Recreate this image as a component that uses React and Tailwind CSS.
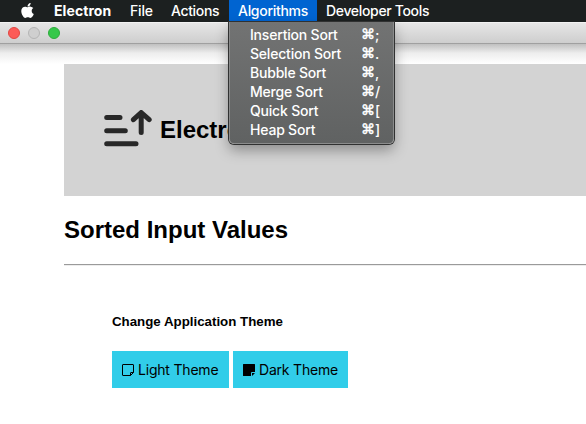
import React from "react";
import { FaApple } from "react-icons/fa";

const ITEMS = [
  ["Insertion Sort", ";"],
  ["Selection Sort", "."],
  ["Bubble Sort", ","],
  ["Merge Sort", "/"],
  ["Quick Sort", "["],
  ["Heap Sort", "]"],
];

function MenuBar() {
  return (
    <nav className="flex h-[22px] items-center bg-[#1c2020] font-['Inter',sans-serif] text-[14px] leading-[22px] font-medium whitespace-nowrap text-white">
      <FaApple className="-mt-[2px] ml-[20px] h-[17px] w-[15px] shrink-0" />
      <span className="ml-[19px] w-[76px] font-bold tracking-[0.08px]">Electron</span>
      <span className="w-[41px] tracking-[-0.2px]">File</span>
      <span className="w-[58px] tracking-[-0.35px]">Actions</span>
      <div className="relative h-[22px] w-[88px] bg-[#0064d1] pl-[9px]">
        <span className="tracking-[-0.3px]">Algorithms</span>
        <Dropdown />
      </div>
      <span className="ml-[9px] tracking-[-0.33px]">Developer Tools</span>
    </nav>
  );
}

function Dropdown() {
  return (
    <ul className="absolute top-[22px] left-0 z-10 h-[122px] w-[165px] rounded-b-[5px] border border-t-0 border-[#8b8c8c] bg-gradient-to-b from-[#727373] to-[#606262] pt-[3px] shadow-[0_0_0_1px_#303131,0_6px_14px_rgba(0,0,0,0.35)]">
      {ITEMS.map(([name, key]) => (
        <li key={name} className="flex h-[19px] items-center pl-[20px] text-[14px] leading-[19px]">
          <span className="w-[111px] tracking-[-0.2px]">{name}</span>
          <span className="w-[14px] font-['DejaVu_Sans',sans-serif] text-[14px] font-normal [-webkit-text-stroke:0.5px_white]">⌘</span>
          <span>{key}</span>
        </li>
      ))}
    </ul>
  );
}

function SortLogo() {
  return (
    <svg width="48" height="40" viewBox="0 0 48 40" fill="none" stroke="#282828" strokeWidth="5" strokeLinecap="round" strokeLinejoin="round">
      <path d="M2.7 7.5H16M2.7 20.7H21.3M2.7 33.8H32" />
      <path d="M37.2 22.5V3M29.4 9.7L37.2 2.5L45.2 9.7" />
    </svg>
  );
}

function NoteIcon({ filled }) {
  return (
    <svg className="mr-[4px] shrink-0" width="12" height="12" viewBox="0 0 12 12" fill={filled ? "#000" : "none"} stroke="#000">
      {filled ? (
        <path stroke="none" d="M0.5 0H11.5Q12 0 12 .5V8H9Q8 8 8 9V12H.5Q0 12 0 11.5V.5Q0 0 .5 0ZM9 9H12L9 12Z" />
      ) : (
        <path d="M1 .5H11Q11.5 .5 11.5 1V8.5L8.5 11.5H1Q.5 11.5 .5 11V1Q.5 .5 1 .5ZM8.5 11.5V9Q8.5 8.5 9 8.5H11.5" />
      )}
    </svg>
  );
}

function ThemeButton({ label, filled, className }) {
  return (
    <button className={`flex h-[37px] items-center bg-[#31cde9] pl-[10px] font-['Inter',sans-serif] text-[14px] tracking-[-0.2px] whitespace-nowrap text-black ${className}`}>
      <NoteIcon filled={filled} />
      <span>{label}</span>
    </button>
  );
}

export default function App() {
  return (
    <div className="h-[424px] w-[586px] overflow-hidden bg-white font-['Liberation_Sans',Arial,sans-serif] text-black">
      <MenuBar />
      <div className="flex h-[22px] items-center gap-[8px] border-t border-b border-t-[#f2f2f2] border-b-[#a0a0a0] bg-gradient-to-b from-[#e6e6e6] to-[#cecece] pl-[8px]">
        <span className="size-[12px] rounded-full border border-[#e24742] bg-[#fc5b57]" />
        <span className="size-[12px] rounded-full border border-[#b5b5b5] bg-[#cfcfcf]" />
        <span className="size-[12px] rounded-full border border-[#2dac3b] bg-[#35c84a]" />
      </div>
      <div className="h-[20px] bg-gradient-to-b from-[#c0c0c0] via-[#ededed] via-45% to-white" />
      <main className="ml-[64px]">
        <header className="flex h-[132px] items-center bg-[#d3d3d3] pl-[40px]">
          <SortLogo />
          <h1 className="ml-[8px] text-[24px] font-bold whitespace-nowrap">Electron</h1>
        </header>
        <h2 className="mt-[20px] h-[28px] text-[24px] leading-[28px] font-bold tracking-[0px]">Sorted Input Values</h2>
        <hr className="mt-[20px] h-[2px] border-t border-b border-t-[#9a9a9a] border-b-[#ededed]" />
        <section className="ml-[48px]">
          <h3 className="mt-[48px] h-[16px] text-[13.3px] leading-[16px] font-bold">Change Application Theme</h3>
          <div className="mt-[21px] flex gap-[4px]">
            <ThemeButton label="Light Theme" className="w-[117px]" />
            <ThemeButton label="Dark Theme" filled className="w-[115px]" />
          </div>
        </section>
      </main>
    </div>
  );
}
